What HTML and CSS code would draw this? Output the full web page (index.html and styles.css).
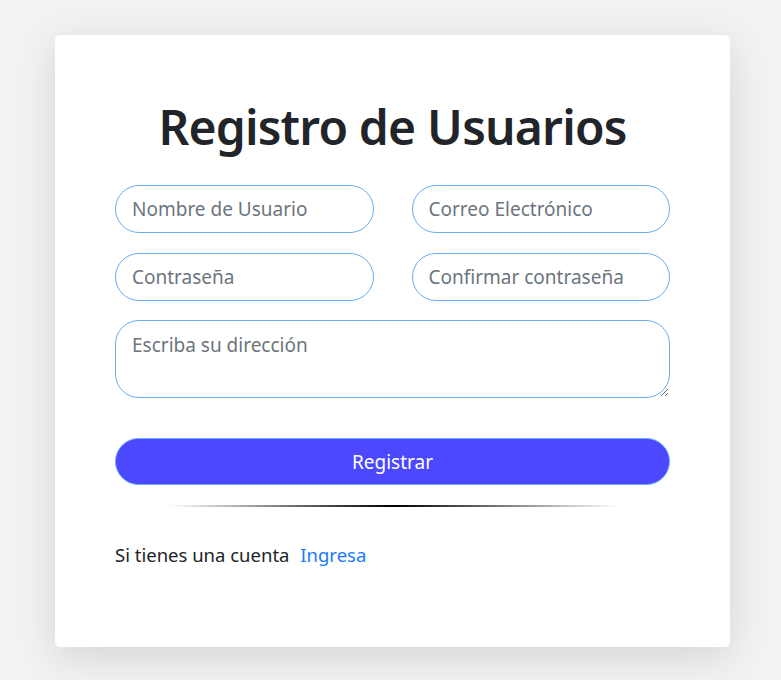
FILE: index.html
```html
<!DOCTYPE html>
<html lang="es">
<head>
<meta charset="utf-8">
<title>Registro de Usuarios</title>
<link rel="stylesheet" href="styles.css">
</head>
<body>
<main class="card">
  <h1 class="title">Registro de Usuarios</h1>
  <form class="form">
    <div class="grid">
      <input class="field" type="text" placeholder="Nombre de Usuario">
      <input class="field" type="email" placeholder="Correo Electrónico">
      <input class="field" type="password" placeholder="Contraseña">
      <input class="field" type="password" placeholder="Confirmar contraseña">
    </div>
    <textarea class="field area" placeholder="Escriba su dirección"></textarea>
    <button class="btn" type="button">Registrar</button>
  </form>
  <hr class="divider">
  <p class="login">Si tienes una cuenta <a href="#" class="link">Ingresa</a></p>
</main>
</body>
</html>
```
FILE: styles.css
```css
html, body {
  margin: 0;
  padding: 0;
}
body {
  background: #f2f2f2;
  font-family: "Noto Sans", "Open Sans", sans-serif;
  color: #212529;
  height: 680px;
  overflow: hidden;
}
.card {
  box-sizing: border-box;
  width: 675px;
  height: 612px;
  margin: 35px 0 0 55px;
  padding: 0 60px;
  background: #fff;
  border-radius: 5px;
  box-shadow: 0 10px 40px rgba(0, 0, 0, 0.12);
  overflow: hidden;
}
.title {
  margin: 0;
  padding-top: 62px;
  height: 60px;
  line-height: 60px;
  text-align: center;
  font-size: 48px;
  font-weight: 600;
  letter-spacing: -0.8px;
}
.form {
  margin-top: 28px;
}
.grid {
  display: grid;
  grid-template-columns: 1fr 1fr;
  column-gap: 38px;
  row-gap: 20px;
}
.field {
  box-sizing: border-box;
  display: block;
  width: 100%;
  height: 48px;
  padding: 0 16px;
  border: 1px solid #66aef5;
  border-radius: 24px;
  background: #fff;
  font-family: inherit;
  font-size: 19px;
  color: #495057;
  outline: none;
}
.field::placeholder {
  color: #6c757d;
}
.area {
  margin-top: 19px;
  height: 78px;
  padding: 11px 16px;
  resize: vertical;
  line-height: 1.4;
}
.btn {
  display: block;
  box-sizing: border-box;
  width: 100%;
  height: 47px;
  margin-top: 40px;
  border: 1px solid #66aef5;
  border-radius: 24px;
  background: #4b48ff;
  color: #fff;
  font-family: inherit;
  font-size: 19px;
}
.divider {
  width: 450px;
  height: 2px;
  margin: 20px auto 0;
  border: 0;
  background: linear-gradient(to right, rgba(0,0,0,0), #000 50%, rgba(0,0,0,0));
}
.login {
  margin: 35px 0 0;
  font-size: 18.5px;
  line-height: 26px;
}
.link {
  color: #1a7bff;
  text-decoration: none;
  margin-left: 6px;
}
```
